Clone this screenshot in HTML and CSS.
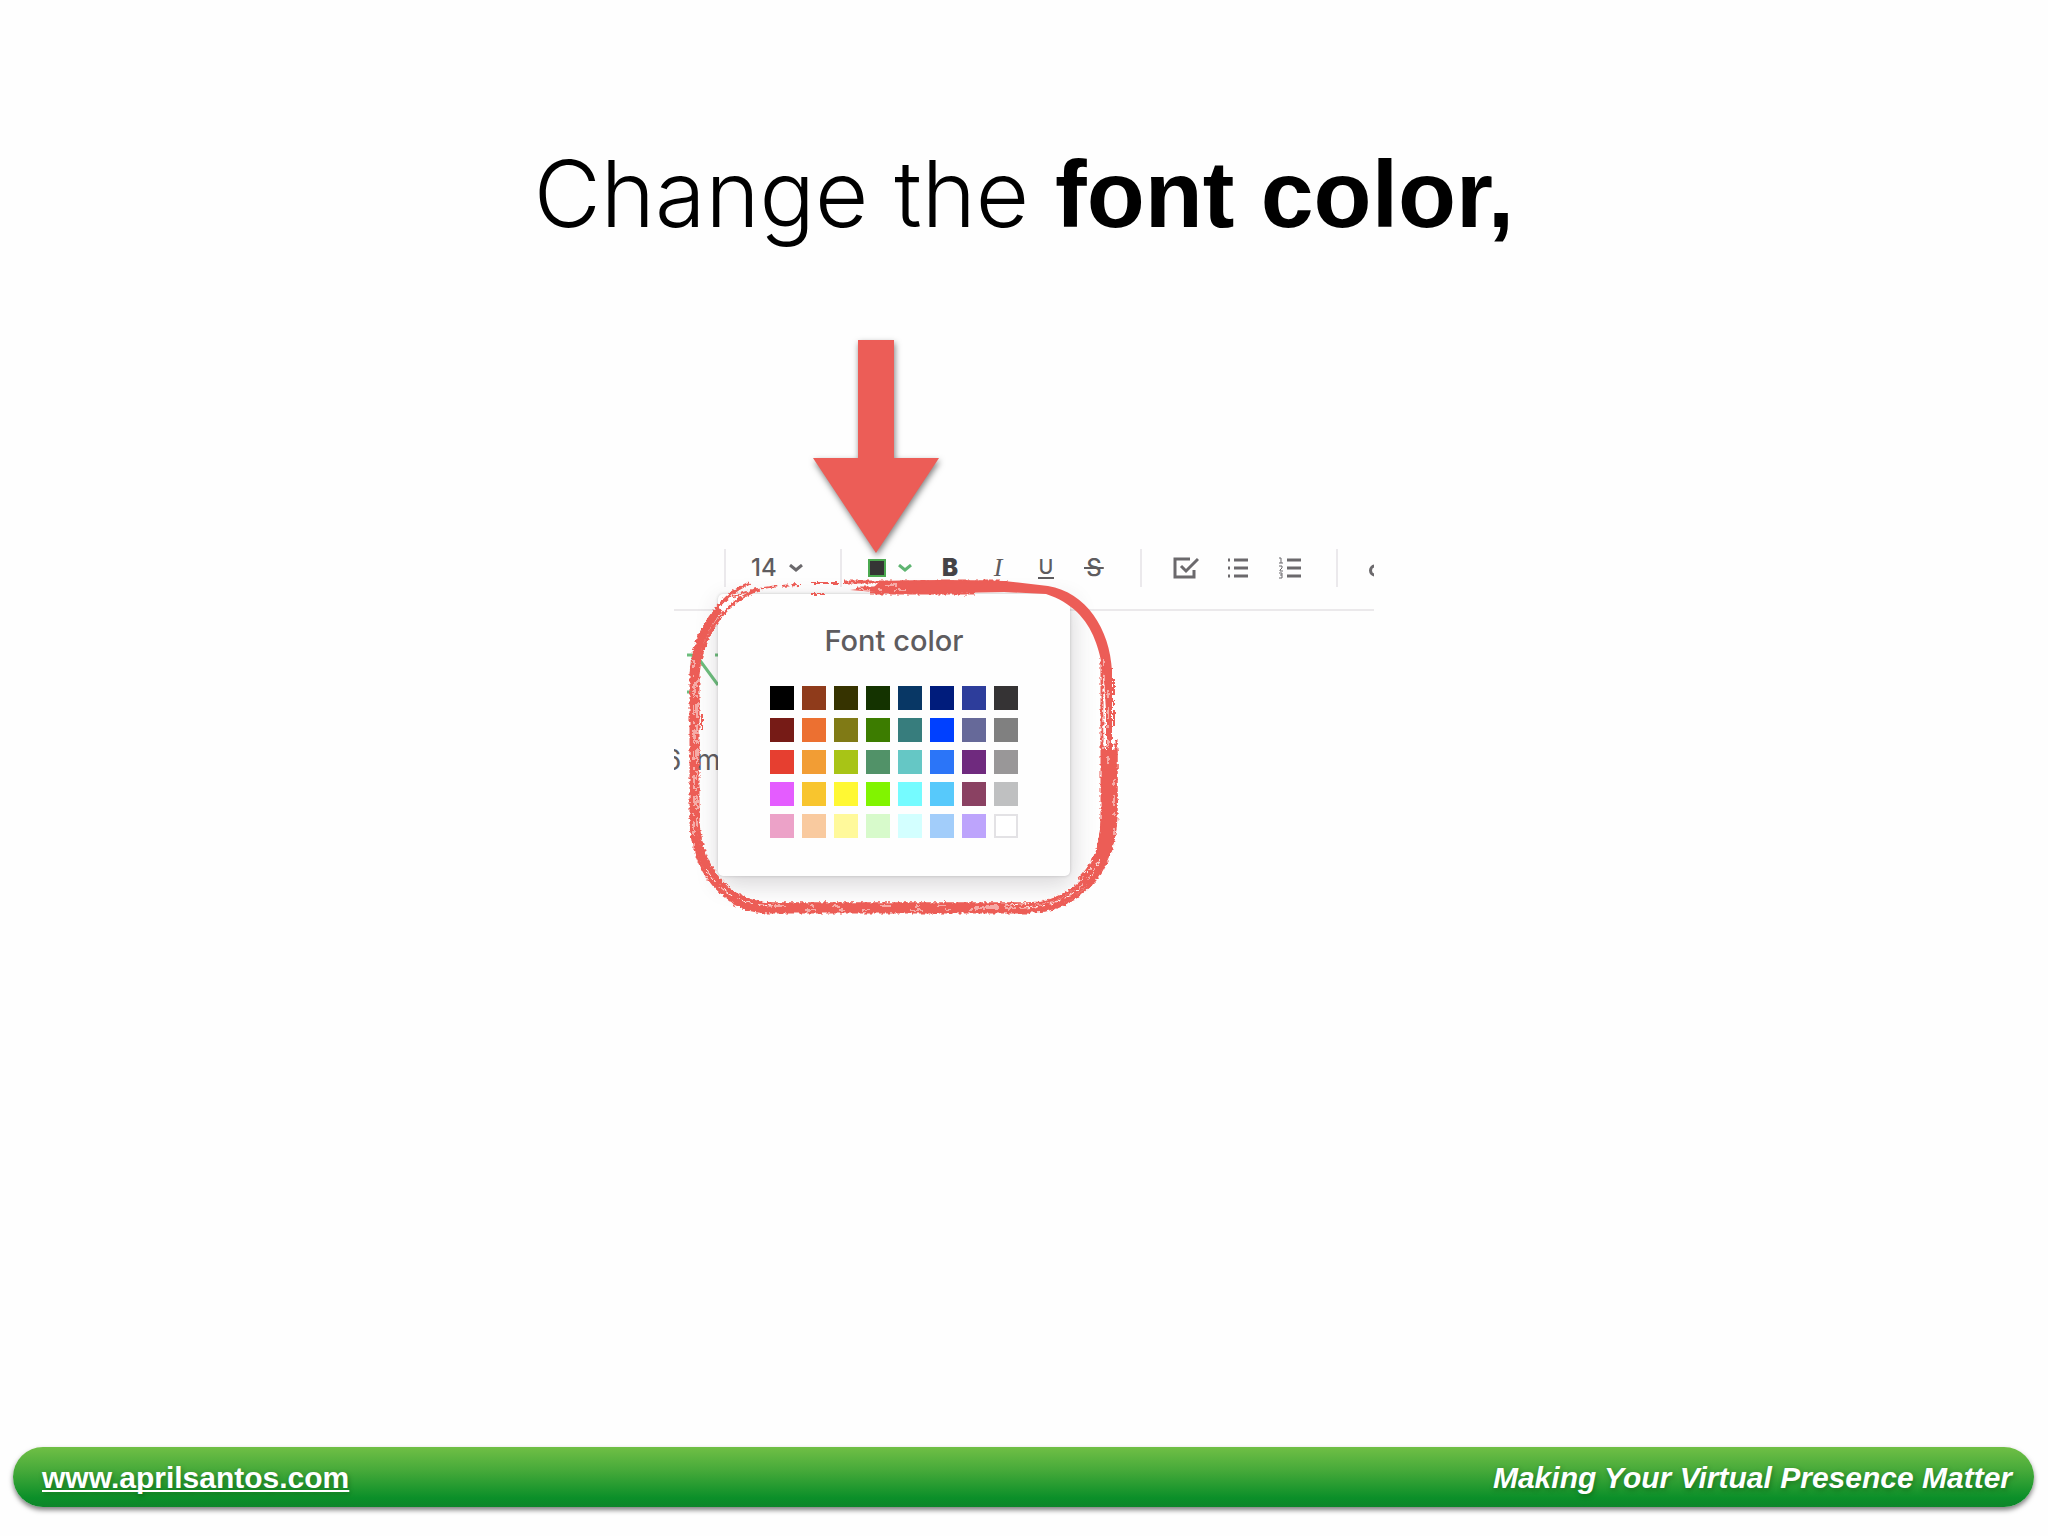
FILE: index.html
```html
<!DOCTYPE html>
<html lang="en">
<head>
    <meta charset="UTF-8">
    <meta name="viewport" content="width=device-width, initial-scale=1.0">
    <title>Change the font color</title>
    <link rel="stylesheet" href="styles.css">
</head>
<body>
    <main>
        <h1>Change the <b>font color,</b></h1>
        <div class="demo">
            <svg class="arrow" width="126" height="214" viewBox="0 0 126 214" aria-hidden="true">
                <path d="M45 0h36v118h45L63 213 0 118h45z"/>
            </svg>
            <div class="editor">
                <div class="toolbar">
                    <div class="group size">
                        <select aria-label="Font size"><option>14</option></select>
                        <svg class="chevron" width="14" height="8" viewBox="0 0 14 8"><path d="M1 1l6 5 6-5"/></svg>
                    </div>
                    <div class="group text">
                        <button class="color" aria-label="Font color">
                            <span class="current"></span>
                            <svg class="chevron" width="14" height="8" viewBox="0 0 14 8"><path d="M1 1l6 5 6-5"/></svg>
                        </button>
                        <button class="bold">B</button>
                        <button class="italic">I</button>
                        <button class="underline"><span>U</span></button>
                        <button class="strike"><span>S</span></button>
                    </div>
                    <div class="group lists">
                        <button aria-label="Checkbox">
                            <svg width="26" height="22" viewBox="0 0 26 22"><path d="M17 2H2v18h19v-7M8 9l5 5L25 2"/></svg>
                        </button>
                        <button aria-label="Bulleted list">
                            <svg width="22" height="20" viewBox="0 0 22 20"><path d="M7 2h14M7 10h14M7 18h14M1 2h2M1 10h2M1 18h2"/></svg>
                        </button>
                        <button aria-label="Numbered list">
                            <svg width="24" height="24" viewBox="0 0 24 24"><path d="M9 4h14M9 12h14M9 20h14"/><path class="thin" d="M1 2h2v5M1 7h4M1 10h3v2L2 14v1h3M1 17h3v5H1M2 19h2"/></svg>
                        </button>
                    </div>
                    <button class="link" aria-label="Link">
                        <svg width="26" height="22" viewBox="0 0 26 22"><path d="M12 8H7a4 4 0 0 0 0 9h5M14 8h5a4 4 0 0 1 0 9h-5"/></svg>
                    </button>
                </div>
                <div class="note">
                    <svg class="logo" width="40" height="44" viewBox="0 0 40 44" aria-hidden="true">
                        <path d="M0 4h9l22 30M6 4v36M0 41h9M28 4h8"/>
                    </svg>
                    <p>6 im</p>
                </div>
                <div class="popover">
                    <h2>Font color</h2>
                    <div class="swatches">
                        <button style="background: #000000" aria-label="Black"></button>
                        <button style="background: #8f3b1b" aria-label="Brown"></button>
                        <button style="background: #363300" aria-label="Dark olive"></button>
                        <button style="background: #143300" aria-label="Dark green"></button>
                        <button style="background: #083765" aria-label="Dark teal"></button>
                        <button style="background: #001c7c" aria-label="Navy"></button>
                        <button style="background: #2d3d9b" aria-label="Indigo"></button>
                        <button style="background: #353334" aria-label="Charcoal"></button>
                        <button style="background: #761b16" aria-label="Dark red"></button>
                        <button style="background: #ec7031" aria-label="Orange"></button>
                        <button style="background: #807a15" aria-label="Olive"></button>
                        <button style="background: #3c7c00" aria-label="Green"></button>
                        <button style="background: #377d7d" aria-label="Teal"></button>
                        <button style="background: #0040ff" aria-label="Blue"></button>
                        <button style="background: #666999" aria-label="Blue gray"></button>
                        <button style="background: #808080" aria-label="Gray"></button>
                        <button style="background: #e63f30" aria-label="Red"></button>
                        <button style="background: #f29d34" aria-label="Light orange"></button>
                        <button style="background: #a8c416" aria-label="Lime"></button>
                        <button style="background: #519268" aria-label="Sea green"></button>
                        <button style="background: #65c7c5" aria-label="Aqua"></button>
                        <button style="background: #2b75f8" aria-label="Light blue"></button>
                        <button style="background: #6f2a7e" aria-label="Violet"></button>
                        <button style="background: #999798" aria-label="Medium gray"></button>
                        <button style="background: #e45cff" aria-label="Pink"></button>
                        <button style="background: #f8c52e" aria-label="Gold"></button>
                        <button style="background: #fff833" aria-label="Yellow"></button>
                        <button style="background: #81f400" aria-label="Bright green"></button>
                        <button style="background: #75fbff" aria-label="Turquoise"></button>
                        <button style="background: #57c9fb" aria-label="Sky blue"></button>
                        <button style="background: #8a4162" aria-label="Plum"></button>
                        <button style="background: #bfc0c1" aria-label="Silver"></button>
                        <button style="background: #eca2c8" aria-label="Rose"></button>
                        <button style="background: #f9ca9f" aria-label="Tan"></button>
                        <button style="background: #fff99b" aria-label="Light yellow"></button>
                        <button style="background: #d7facb" aria-label="Light green"></button>
                        <button style="background: #d3ffff" aria-label="Light turquoise"></button>
                        <button style="background: #a2cdfa" aria-label="Pale blue"></button>
                        <button style="background: #bda4fc" aria-label="Lavender"></button>
                        <button class="white" aria-label="White"></button>
                    </div>
                </div>
            </div>
            <svg class="scribble" width="470" height="400" viewBox="0 0 470 400" aria-hidden="true">
                <defs>
                    <filter id="rough" x="0" y="0" width="470" height="400" filterUnits="userSpaceOnUse">
                        <feTurbulence type="fractalNoise" baseFrequency="0.3" numOctaves="2" seed="4"/>
                        <feDisplacementMap in="SourceGraphic" scale="5" xChannelSelector="R" yChannelSelector="G"/>
                    </filter>
                </defs>
                <g class="body">
                    <path d="M206 32Q270 30 330 32L374 37C412 43 436 80 438 122V160H432C430 110 424 62 372 45L330 43 226 45 176 41 200 38Z"/>
                </g>
                <g class="strokes" filter="url(#rough)">
                    <path d="M170 33H334M182 39H340M196 44H300" stroke-width="3"/>
                    <path d="M76 34C46 46 18 84 17 126V274C19 322 48 361 98 362H360C402 361 440 325 442 262V190" stroke-width="3"/>
                    <path d="M86 40C56 50 28 80 24 126V274C28 318 52 355 100 355H350C398 354 426 326 428 270V110" stroke-width="3"/>
                    <path d="M46 60C30 80 21 104 20 130V274C24 320 50 358 100 359H358C400 357 432 325 435 266V120" stroke-width="6"/>
                    <path d="M60 350C76 358 88 359 100 359H356" stroke-width="11"/>
                    <path d="M436 200V270C434 300 424 320 410 334" stroke-width="15"/>
                    <path d="M58 48C80 39 96 37 126 36M138 34H170M138 45H150M440 130V180M28 166V182" stroke-width="2" stroke-dasharray="16 4 7 4"/>
                </g>
                <g class="gaps" filter="url(#rough)">
                    <path d="M20 110V300M23 130V280" stroke-dasharray="9 7 3 5 14 8"/>
                    <path d="M430 110V200M434 142V215M440 230V300" stroke-dasharray="7 9 12 6 3 12"/>
                    <path d="M100 357H330M130 361H300" stroke-dasharray="12 24 4 18 8 40"/>
                    <path d="M300 359H350C390 357 412 340 426 310M330 356C380 355 400 342 418 318" stroke-dasharray="24 6 12 4"/>
                    <path d="M32 320C48 345 65 355 98 357" stroke-dasharray="16 6"/>
                    <path d="M176 36H230M184 41H240" stroke-dasharray="12 8 5 11"/>
                </g>
            </svg>
        </div>
    </main>
    <footer>
        <a href="http://www.aprilsantos.com">www.aprilsantos.com</a>
        <em>Making Your Virtual Presence Matter</em>
    </footer>
</body>
</html>
```

FILE: styles.css
```css
* {
    box-sizing: border-box;
}
body {
    display: flex;
    flex-flow: column;
    min-height: 100vh;
    margin: 0;
    background: #fefefe;
    color: #000;
    font-family: "Liberation Sans", Arial, sans-serif;
}
main {
    flex: 1;
    padding: 138px 24px 0;
}
h1 {
    margin: 0 0 90px;
    font: 300 92px/112px Inter, "Liberation Sans", sans-serif;
    text-align: center;
}
h1 b {
    font: 700 95px/1 "Liberation Sans", Arial, sans-serif;
}
button, select {
    margin: 0;
    padding: 0;
    border: 0;
    background: none;
    color: #5e5c5f;
    font: 500 24px/28px Inter, sans-serif;
}
svg {
    display: block;
    fill: none;
}

.demo {
    position: relative;
    max-width: 700px;
    margin: 0 auto;
}
.arrow {
    margin: 0 0 -5px 139px;
    position: relative;
    z-index: 1;
    overflow: visible;
    fill: #ec5d57;
    filter: drop-shadow(1px 3px 3px rgba(0, 0, 0, .5));
}
.editor {
    position: relative;
    height: 366px;
    overflow: hidden;
}

.toolbar {
    display: flex;
    align-items: flex-start;
    height: 62px;
    padding-left: 50px;
    border-bottom: 2px solid #ebe9eb;
    stroke: #6b696c;
    stroke-width: 3px;
}
.group {
    display: flex;
    flex: none;
    align-items: center;
    height: 38px;
    border-left: 2px solid #ebe9ec;
}
.size {
    gap: 12px;
    width: 116px;
    padding-left: 25px;
}
.size select {
    appearance: none;
}
.text {
    width: 300px;
    padding-left: 26px;
}
.lists {
    width: 198px;
    padding-left: 18px;
    border-right: 2px solid #ebe9ec;
}
.toolbar button {
    display: flex;
    flex: none;
    align-items: center;
    justify-content: center;
    width: 48px;
    height: 36px;
}
.toolbar .lists button {
    width: 52px;
}
.toolbar .color {
    justify-content: flex-start;
    gap: 12px;
    width: 58px;
    stroke: #5fb572;
}
.current {
    width: 18px;
    height: 18px;
    border: 2px solid #4ba950;
    background: #353535;
}
.toolbar .bold {
    color: #454346;
    font-weight: 900;
}
.toolbar .italic {
    font: italic 400 26px/28px "Liberation Serif", serif;
}
.underline span {
    padding: 0 1px;
    border-bottom: 2px solid #5e5c5f;
    font-size: 20px;
    line-height: 20px;
}
.strike span {
    padding: 0 2px;
    background: linear-gradient(#5e5c5f, #5e5c5f) center / 100% 2px no-repeat;
    line-height: 24px;
}
.thin {
    stroke-width: 1px;
}
.toolbar .link {
    width: 26px;
    margin-left: 30px;
    padding-top: 4px;
}

.logo {
    margin: 40px 0 0 13px;
    stroke: #6cbd7c;
    stroke-width: 3px;
}
.note p {
    margin: 48px 0 0 -10px;
    color: #5e5c5f;
    font: 400 28px/34px Inter, sans-serif;
}

.popover {
    position: absolute;
    top: 45px;
    left: 44px;
    width: 352px;
    padding: 30px 52px 38px;
    border-radius: 5px;
    background: #fefefe;
    box-shadow: 0 0 3px rgba(60, 50, 60, .24), 2px 8px 24px rgba(60, 50, 60, .2);
}
.popover h2 {
    margin: 0 0 28px;
    color: #5e5c5f;
    font: 500 29px/34px Inter, sans-serif;
    text-align: center;
}
.swatches {
    display: grid;
    grid-template-columns: repeat(8, 24px);
    gap: 8px;
}
.swatches button {
    height: 24px;
}
.swatches .white {
    border: 2px solid #e3e2e5;
    background: #fff;
}

.scribble {
    position: absolute;
    top: 209px;
    left: 0;
}
.body {
    fill: #ec5d57;
}
.strokes {
    stroke: #ec5d57;
}
.gaps {
    stroke: #fff8f7;
    stroke-width: 1px;
}

footer {
    display: flex;
    align-items: center;
    justify-content: space-between;
    height: 60px;
    margin: 0 14px 29px 13px;
    padding: 2px 22px 0 29px;
    border-radius: 30px;
    background: linear-gradient(#70bf45, #45a939 40%, #0b8f29 85%, #0d852a);
    box-shadow: 0 3px 5px rgba(0, 0, 0, .5);
    color: #fff;
    font-size: 30px;
    font-weight: 700;
    text-shadow: 1px 2px 5px rgba(0, 60, 0, .4);
}
footer a {
    color: inherit;
    text-decoration-thickness: 2px;
    text-underline-offset: 2px;
    text-decoration-skip-ink: none;
}
```
